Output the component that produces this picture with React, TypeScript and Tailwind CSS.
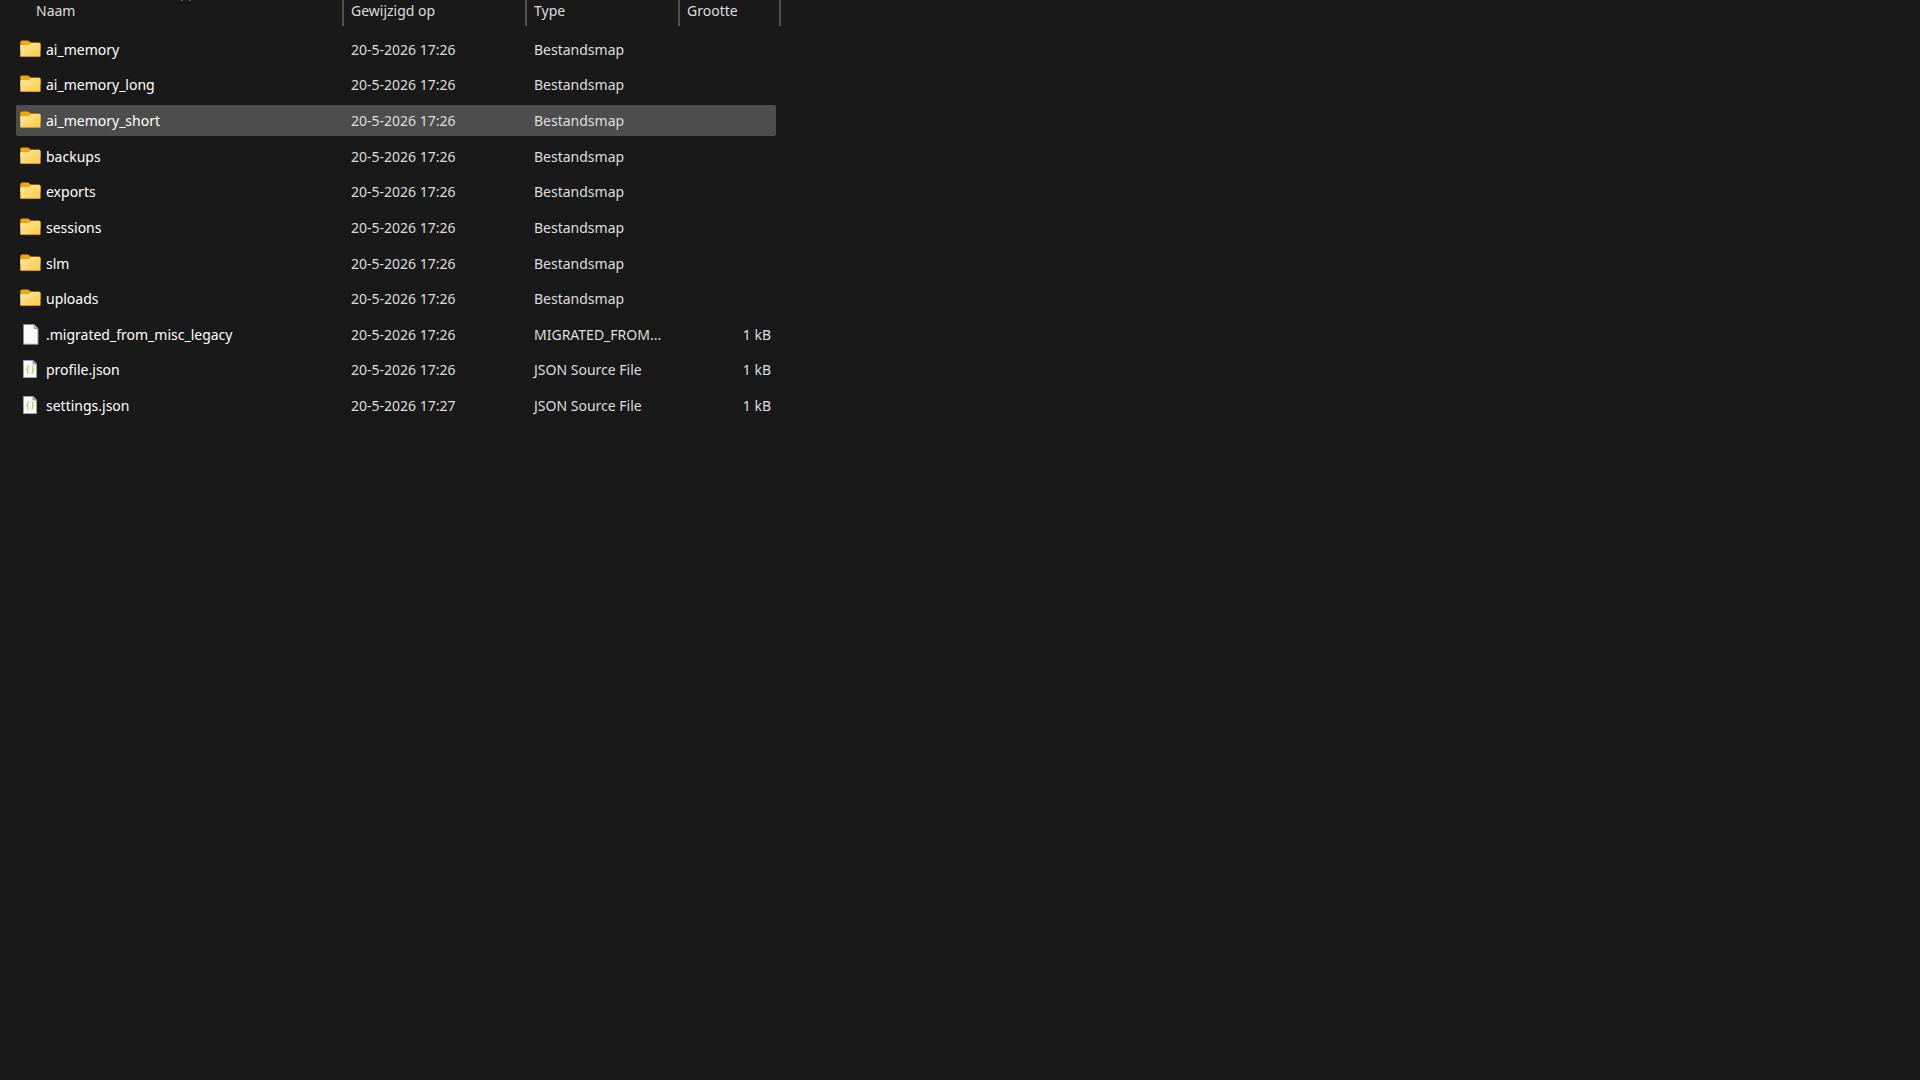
import React from 'react';
import clsx from 'clsx';

type Kind = 'folder' | 'blank' | 'json';

interface Entry {
    name: string;
    modified: string;
    type: string;
    size?: string;
    kind: Kind;
}

const entries: Entry[] = [
    { name: 'ai_memory', modified: '20-5-2026 17:26', type: 'Bestandsmap', kind: 'folder' },
    { name: 'ai_memory_long', modified: '20-5-2026 17:26', type: 'Bestandsmap', kind: 'folder' },
    { name: 'ai_memory_short', modified: '20-5-2026 17:26', type: 'Bestandsmap', kind: 'folder' },
    { name: 'backups', modified: '20-5-2026 17:26', type: 'Bestandsmap', kind: 'folder' },
    { name: 'exports', modified: '20-5-2026 17:26', type: 'Bestandsmap', kind: 'folder' },
    { name: 'sessions', modified: '20-5-2026 17:26', type: 'Bestandsmap', kind: 'folder' },
    { name: 'slm', modified: '20-5-2026 17:26', type: 'Bestandsmap', kind: 'folder' },
    { name: 'uploads', modified: '20-5-2026 17:26', type: 'Bestandsmap', kind: 'folder' },
    { name: '.migrated_from_misc_legacy', modified: '20-5-2026 17:26', type: 'MIGRATED_FROM...', size: '1 kB', kind: 'blank' },
    { name: 'profile.json', modified: '20-5-2026 17:26', type: 'JSON Source File', size: '1 kB', kind: 'json' },
    { name: 'settings.json', modified: '20-5-2026 17:27', type: 'JSON Source File', size: '1 kB', kind: 'json' },
];

export default function App() {
    const selected = 'ai_memory_short';

    return (
        <main className="min-h-screen bg-[#191919] pl-4 font-['Noto_Sans',sans-serif] text-sm text-[#dedede]">
            <table className="h-[423px] table-fixed border-collapse text-left">
                <colgroup>
                    <col className="w-[328px]" />
                    <col className="w-[183px]" />
                    <col className="w-[153px]" />
                    <col className="w-[101px]" />
                </colgroup>
                <thead>
                    <tr className="h-[31px] align-top">
                        <HeaderCell label="Naam" className="pl-5" sorted />
                        <HeaderCell label="Gewijzigd op" className="pl-[7px]" />
                        <HeaderCell label="Type" className="pl-[7px]" />
                        <HeaderCell label="Grootte" className="pl-[7px]" />
                    </tr>
                </thead>
                <tbody>
                    {entries.map((entry) => (
                        <FileRow key={entry.name} entry={entry} selected={entry.name === selected} />
                    ))}
                </tbody>
            </table>
        </main>
    );
}

function HeaderCell({ label, className, sorted }: { label: string, className: string, sorted?: boolean }) {
    return (
        <th scope="col" className="relative p-0 font-normal" aria-sort={sorted ? 'ascending' : undefined}>
            <button type="button" className={clsx('flex h-[26px] w-full border-r-2 border-[#505050] text-left leading-[22px]', className)}>
                {label}
            </button>
            {sorted && (
                <svg className="absolute top-0 left-[164px] h-px w-3" viewBox="0 0 12 1" aria-hidden="true">
                    <path d="M0.5 0h2.5v1h-2.5zM8.5 0h2.5v1h-2.5z" fill="#4a4a4a" />
                </svg>
            )}
        </th>
    );
}

function FileRow({ entry, selected }: { entry: Entry, selected: boolean }) {
    const cell = clsx('flex h-[31px] items-center pt-0.5 whitespace-nowrap', selected && 'bg-[#4d4d4d]');

    return (
        <tr aria-selected={selected}>
            <td className="p-0">
                <div className={clsx(cell, 'gap-[5px] rounded-l-xs pl-1 text-white')}>
                    <FileIcon kind={entry.kind} />
                    {entry.name}
                </div>
            </td>
            <td className="p-0">
                <div className={clsx(cell, 'pl-[7px]')}>{entry.modified}</div>
            </td>
            <td className="p-0">
                <div className={clsx(cell, 'pl-[7px]')}>{entry.type}</div>
            </td>
            <td className="p-0 pr-[5px]">
                <div className={clsx(cell, 'justify-end rounded-r-xs pr-[5px]')}>{entry.size}</div>
            </td>
        </tr>
    );
}

function FileIcon({ kind }: { kind: Kind }) {
    if (kind === 'folder') {
        return (
            <svg className="h-5 w-[21px] shrink-0" viewBox="0 0 21 20" aria-hidden="true">
                <defs>
                    <linearGradient id="folder-front" x1="0" y1="0" x2="1" y2="1">
                        <stop offset="0" stopColor="#ffe9a6" />
                        <stop offset="1" stopColor="#ffc93c" />
                    </linearGradient>
                </defs>
                <path d="M0.3 2.2q0-1.7 1.7-1.7h5.6q.8 0 1.4.6l1.5 1.4h8.3q1.7 0 1.7 1.7v6H.3z" fill="#f0a808" />
                <path d="M0.3 6.2q0-1.2 1.2-1.2h6.6q.8 0 1.4-.6l1.4-1.1q.6-.4 1.3-.4h6.9q1.4 0 1.4 1.4v11.5q0 1.2-1.2 1.2H1.5Q.3 17 .3 15.8z" fill="url(#folder-front)" />
                <path d="M0.4 16q.2 1 1.2 1h17.7q1 0 1.2-1z" fill="#d29a1c" />
            </svg>
        );
    }

    if (kind === 'blank') {
        return (
            <svg className="h-[22px] w-[21px] shrink-0" viewBox="0 0 21 22" aria-hidden="true">
                <path d="M3.5.5h10.8l3.7 3.9v15.9H3.5z" fill="#f9f9f9" stroke="#8c8c8c" />
                <path d="M14.2.6v3.9h3.7z" fill="#c9c9c9" stroke="#777" strokeWidth=".7" />
            </svg>
        );
    }

    return (
        <svg className="h-5 w-[21px] shrink-0" viewBox="0 0 21 20" aria-hidden="true">
            <path d="M3.5.5h9.6l3.4 3.4v13.6h-13z" fill="#f9f9f9" stroke="#a0a0a0" />
            <path d="M13 .6v3.4h3.4z" fill="#c9c9c9" stroke="#777" strokeWidth=".7" />
            <path d="M9 5.6q-1.3 0-1.3 1.4v1.5l-.8.9.8.9v1.6q0 1.4 1.3 1.4M11.4 5.6q1.3 0 1.3 1.4v1.5l.8.9-.8.9v1.6q0 1.4-1.3 1.4" fill="none" stroke="#c9cb63" strokeWidth="1.3" />
        </svg>
    );
}
